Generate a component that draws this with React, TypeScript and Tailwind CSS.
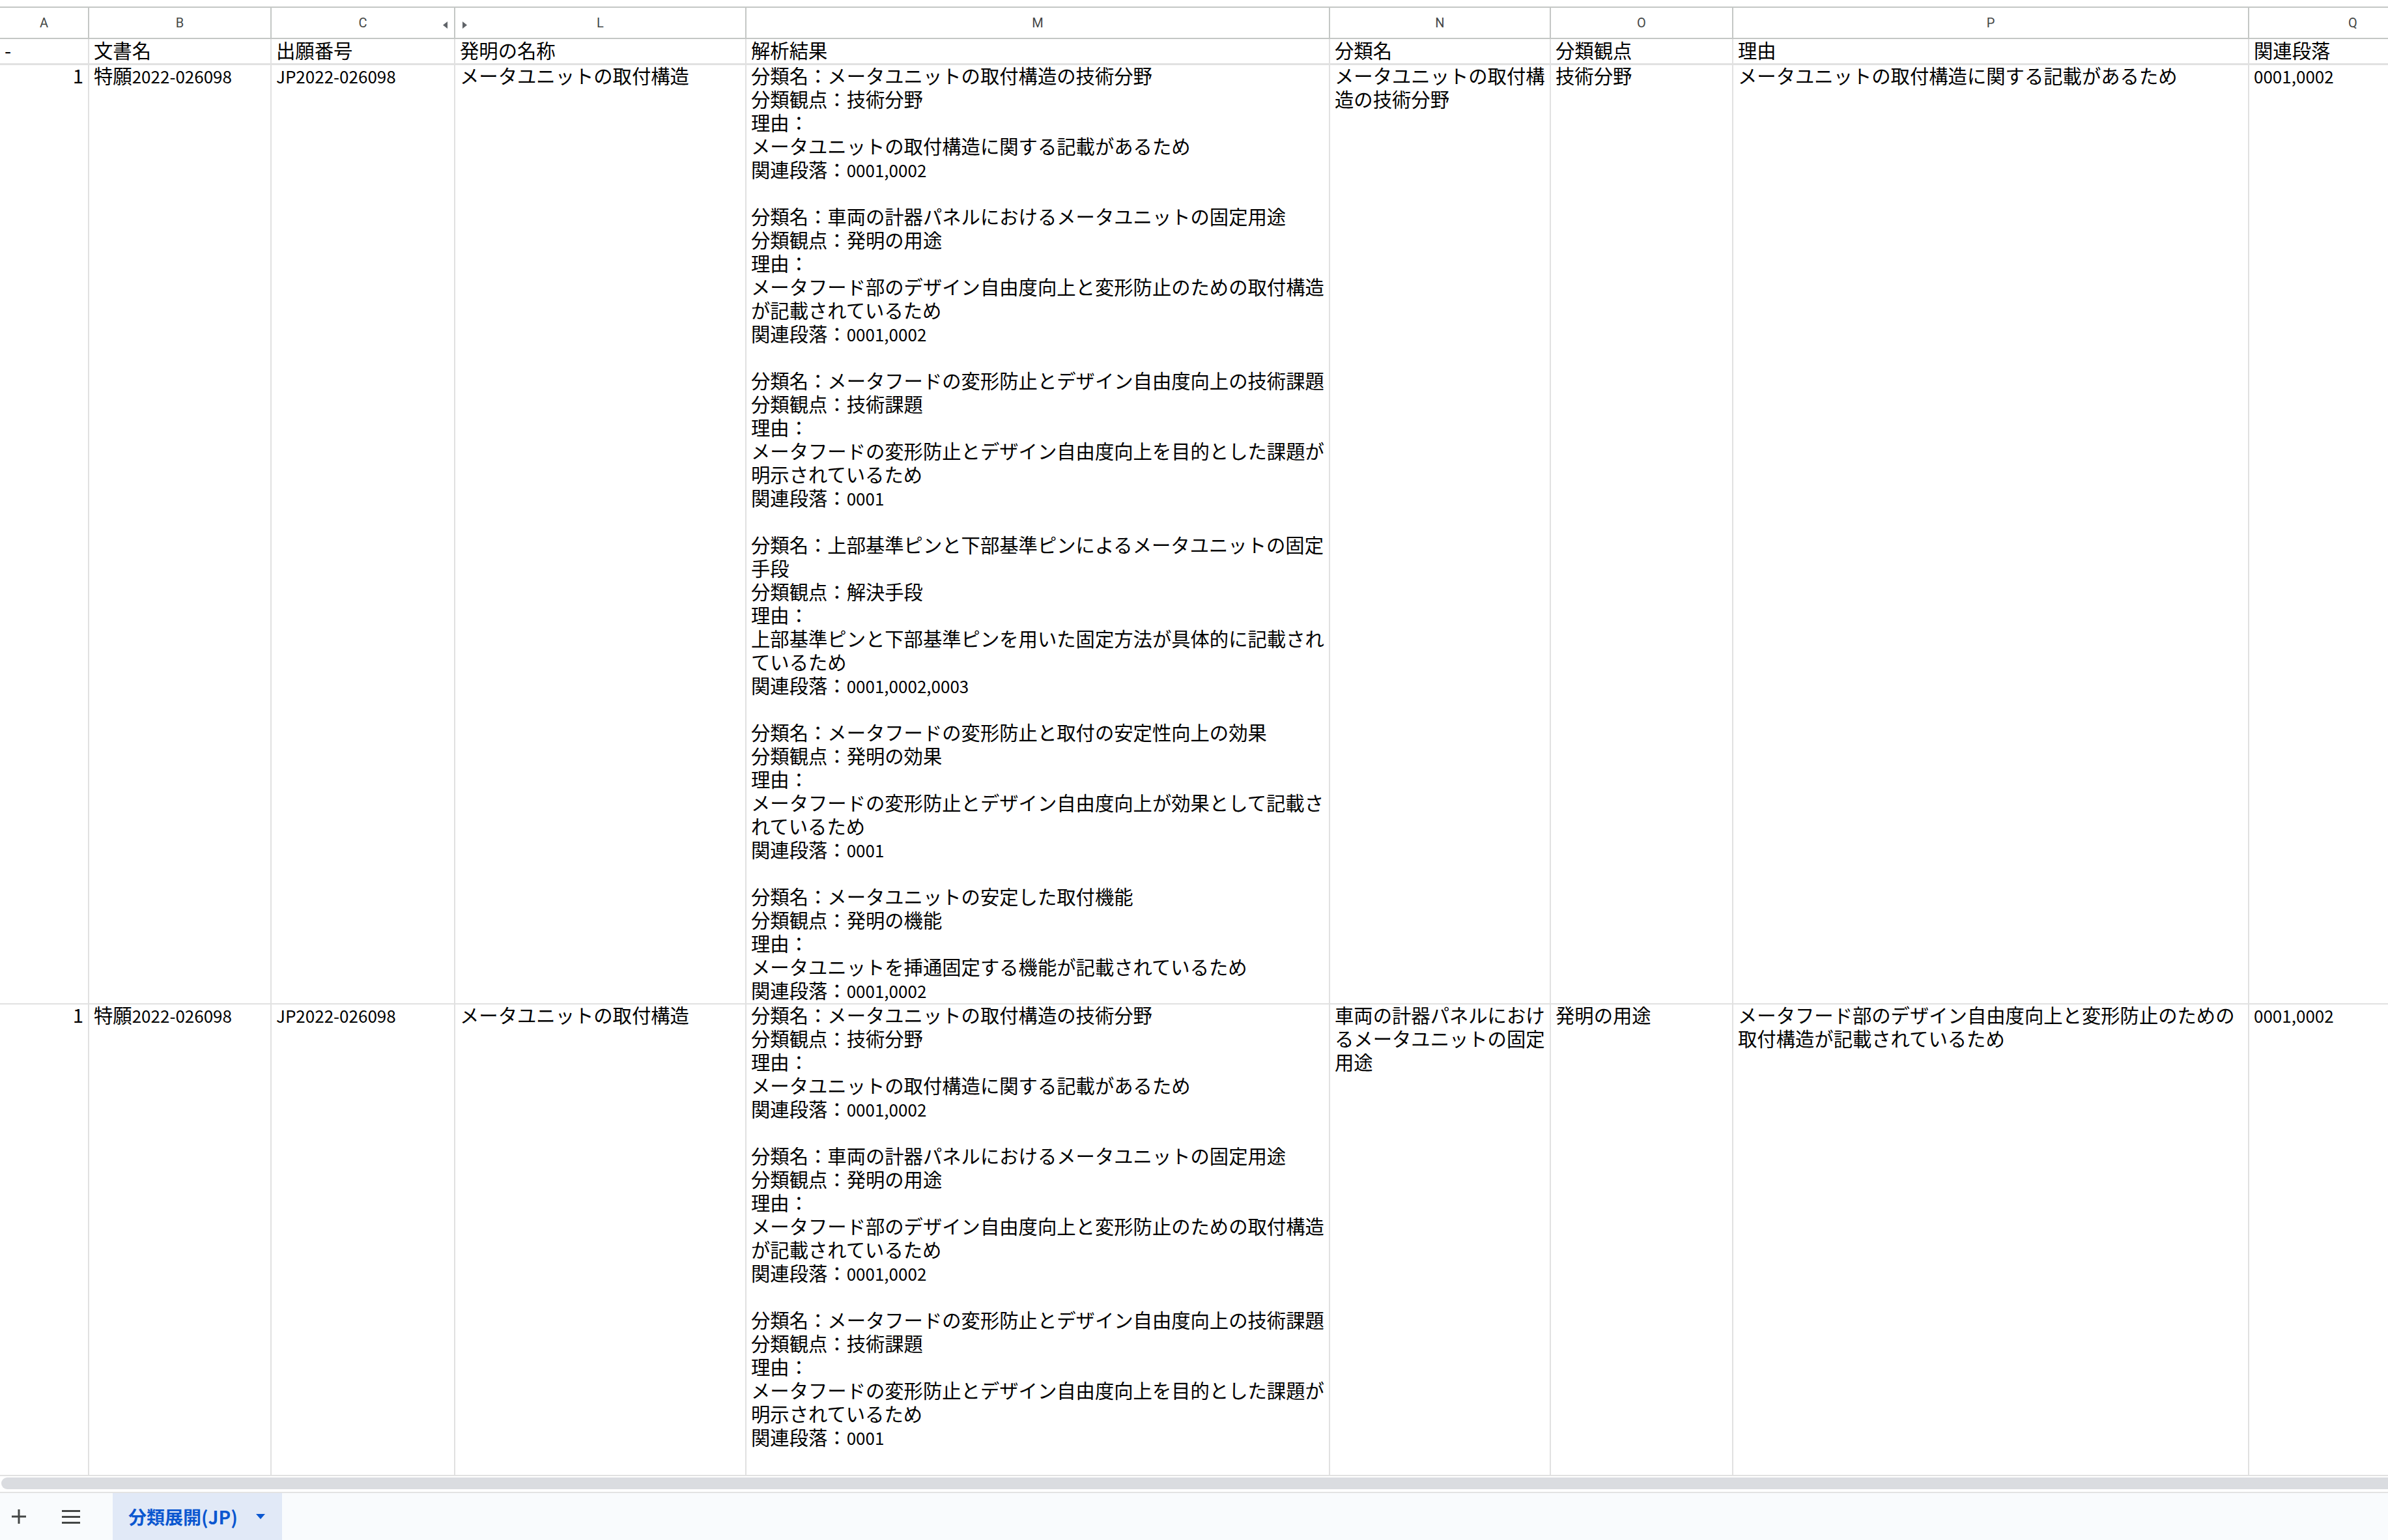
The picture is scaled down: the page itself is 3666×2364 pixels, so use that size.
import React from "react";

const columns = [
  { letter: "A", width: "w-[137px]", arrow: null },
  { letter: "B", width: "w-[280px]", arrow: null },
  { letter: "C", width: "w-[282px]", arrow: "left" },
  { letter: "L", width: "w-[447px]", arrow: "right" },
  { letter: "M", width: "w-[896px]", arrow: null },
  { letter: "N", width: "w-[339px]", arrow: null },
  { letter: "O", width: "w-[280px]", arrow: null },
  { letter: "P", width: "w-[792px]", arrow: null },
  { letter: "Q", width: "w-[320px]", arrow: null },
];

const headers = ["-", "文書名", "出願番号", "発明の名称", "解析結果", "分類名", "分類観点", "理由", "関連段落"];

const analysis = `分類名：メータユニットの取付構造の技術分野
分類観点：技術分野
理由：
メータユニットの取付構造に関する記載があるため
関連段落：0001,0002

分類名：車両の計器パネルにおけるメータユニットの固定用途
分類観点：発明の用途
理由：
メータフード部のデザイン自由度向上と変形防止のための取付構造が記載されているため
関連段落：0001,0002

分類名：メータフードの変形防止とデザイン自由度向上の技術課題
分類観点：技術課題
理由：
メータフードの変形防止とデザイン自由度向上を目的とした課題が明示されているため
関連段落：0001

分類名：上部基準ピンと下部基準ピンによるメータユニットの固定手段
分類観点：解決手段
理由：
上部基準ピンと下部基準ピンを用いた固定方法が具体的に記載されているため
関連段落：0001,0002,0003

分類名：メータフードの変形防止と取付の安定性向上の効果
分類観点：発明の効果
理由：
メータフードの変形防止とデザイン自由度向上が効果として記載されているため
関連段落：0001

分類名：メータユニットの安定した取付機能
分類観点：発明の機能
理由：
メータユニットを挿通固定する機能が記載されているため
関連段落：0001,0002`;

const rows = [
  {
    name: "メータユニットの取付構造の技術分野",
    view: "技術分野",
    reason: "メータユニットの取付構造に関する記載があるため",
    paras: "0001,0002",
  },
  {
    name: "車両の計器パネルにおけるメータユニットの固定用途",
    view: "発明の用途",
    reason: "メータフード部のデザイン自由度向上と変形防止のための取付構造が記載されているため",
    paras: "0001,0002",
  },
];

// latin runs render a bit smaller than the kana/kanji, like the sheet's font
const Txt = ({ text }: { text: string }) => {
  const parts = text.split(/([A-Za-z0-9,\-]+)/);
  return (
    <>
      {parts.map((p, i) =>
        /^[A-Za-z0-9,\-]+$/.test(p) ? (
          <span key={i} className="text-[26px] leading-none">
            {p}
          </span>
        ) : (
          <React.Fragment key={i}>{p}</React.Fragment>
        )
      )}
    </>
  );
};

const cell = "shrink-0 border-r-2 border-[#e1e1e1] pl-[7px] pr-[4px] pb-[3px]";

const App = () => {
  return (
    <div
      className="w-[3666px] h-[2364px] bg-white overflow-hidden flex flex-col text-black"
      style={{ fontFamily: '"Noto Sans CJK JP", "Noto Sans", sans-serif' }}
    >
      <div className="h-[10px] shrink-0" />

      {/* grid */}
      <div className="h-[2256px] shrink-0 overflow-hidden border-t-2 border-b-2 border-t-[#c4c7c5] border-b-[#e1e1e1]">
        {/* column letters */}
        <div className="flex w-max h-[48px] border-b-2 border-[#c4c7c5]">
          {columns.map((c) => (
            <div
              key={c.letter}
              className={`${c.width} relative shrink-0 border-r-2 border-[#c4c7c5] flex items-center justify-center text-[20px] text-[#444746]`}
              style={{ fontFamily: "Roboto, Arial, sans-serif" }}
            >
              {c.letter}
              {c.arrow === "left" && (
                <svg className="absolute right-[10px] top-[21px]" width="7" height="11" viewBox="0 0 7 11">
                  <polygon points="7,0 7,11 0,5.5" fill="#5f6368" />
                </svg>
              )}
              {c.arrow === "right" && (
                <svg className="absolute left-[11px] top-[21px]" width="7" height="11" viewBox="0 0 7 11">
                  <polygon points="0,0 0,11 7,5.5" fill="#5f6368" />
                </svg>
              )}
            </div>
          ))}
        </div>

        {/* header row */}
        <div className="flex w-max border-b-[3px] border-[#e1e1e1] text-[29.33px] leading-[36px]">
          {headers.map((h, i) => (
            <div key={i} className={`${columns[i].width} ${cell} ${i === 0 ? "pl-[3px]" : ""}`}>
              <div className="-mt-[2px]">{h}</div>
            </div>
          ))}
        </div>

        {/* data rows */}
        {rows.map((r, idx) => (
          <div key={idx} className="flex w-max border-b-2 border-[#e1e1e1] text-[29.33px] leading-[36px]">
            <div className={`${columns[0].width} ${cell} text-right pr-[7px]`}>
              <div className="-mt-[3px]">1</div>
            </div>
            <div className={`${columns[1].width} ${cell}`}>
              <div className="-mt-[3px]">
                <Txt text="特願2022-026098" />
              </div>
            </div>
            <div className={`${columns[2].width} ${cell}`}>
              <div className="-mt-[3px]">
                <Txt text="JP2022-026098" />
              </div>
            </div>
            <div className={`${columns[3].width} ${cell}`}>
              <div className="-mt-[3px]">メータユニットの取付構造</div>
            </div>
            <div className={`${columns[4].width} ${cell}`}>
              <div className="-mt-[3px] whitespace-pre-wrap">
                <Txt text={analysis} />
              </div>
            </div>
            <div className={`${columns[5].width} ${cell}`}>
              <div className="-mt-[3px]">{r.name}</div>
            </div>
            <div className={`${columns[6].width} ${cell}`}>
              <div className="-mt-[3px]">{r.view}</div>
            </div>
            <div className={`${columns[7].width} ${cell}`}>
              <div className="-mt-[3px]">{r.reason}</div>
            </div>
            <div className={`${columns[8].width} ${cell}`}>
              <div className="-mt-[3px]">
                <Txt text={r.paras} />
              </div>
            </div>
          </div>
        ))}
      </div>

      {/* horizontal scrollbar */}
      <div className="h-[24px] shrink-0 pt-[2px] pl-[2px]">
        <div className="h-[18px] w-[3700px] rounded-full bg-[#dadce0]" />
      </div>

      {/* sheet tabs */}
      <div className="flex-1 flex border-t-2 border-[#e3e3e3] bg-[#f9fbfd]">
        <div className="w-[57px] flex items-center justify-center">
          <svg width="22" height="22" viewBox="0 0 22 22">
            <rect x="9.5" y="0" width="3" height="22" fill="#444746" />
            <rect x="0" y="9.5" width="22" height="3" fill="#444746" />
          </svg>
        </div>
        <div className="w-[104px] flex items-center justify-center">
          <svg width="28" height="21" viewBox="0 0 28 21">
            <rect x="0" y="0" width="28" height="3" fill="#444746" />
            <rect x="0" y="9" width="28" height="3" fill="#444746" />
            <rect x="0" y="18" width="28" height="3" fill="#444746" />
          </svg>
        </div>
        <div
          className="w-[260px] ml-[12px] bg-[#e1e9f7] flex items-center pl-[24px] gap-[28px] text-[28px] font-bold text-[#0b57d0]"
          style={{ fontFamily: '"Noto Sans CJK JP", Roboto, sans-serif' }}
        >
          <span>分類展開(JP)</span>
          <svg width="14" height="8" viewBox="0 0 14 8">
            <polygon points="0,0 14,0 7,8" fill="#0b57d0" />
          </svg>
        </div>
      </div>
    </div>
  );
};

export default App;
